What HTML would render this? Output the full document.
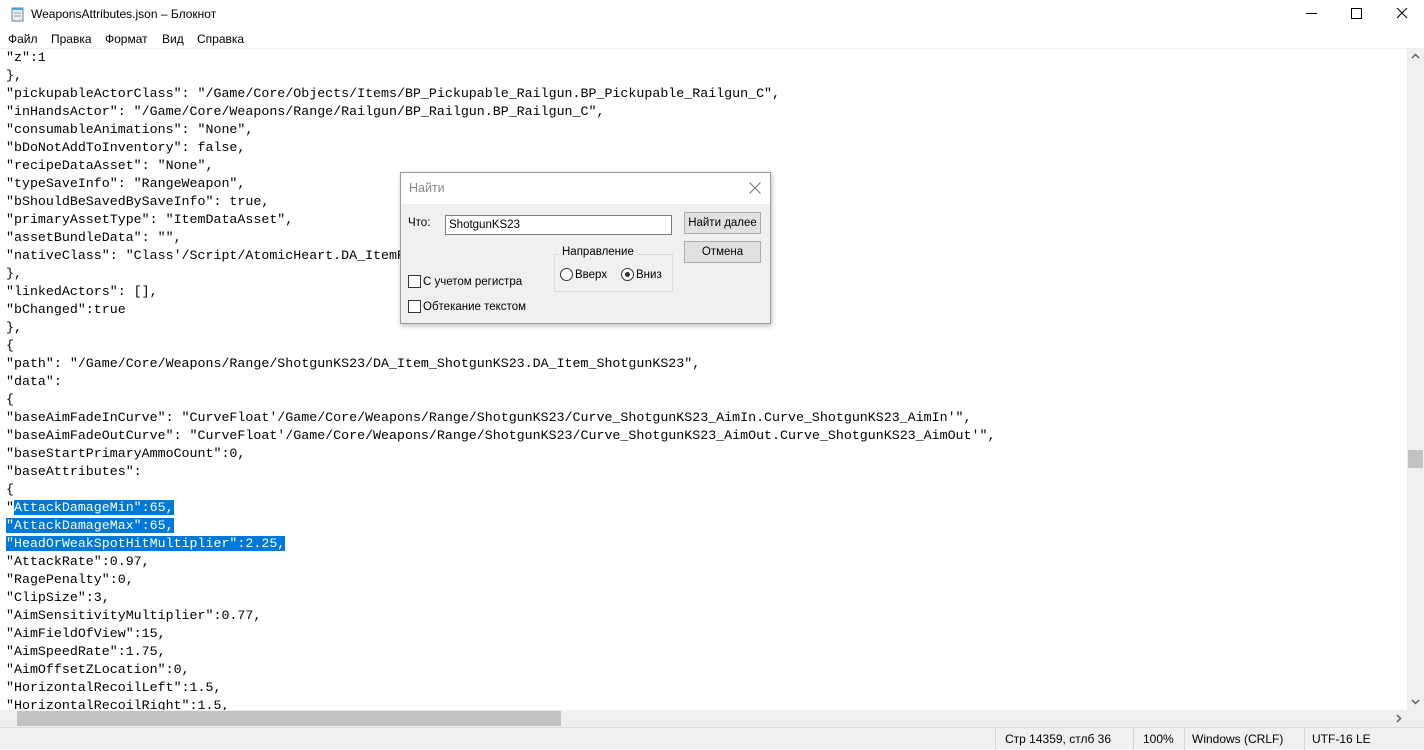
<!DOCTYPE html>
<html><head><meta charset="utf-8"><style>
*{margin:0;padding:0;box-sizing:border-box}
body{width:1424px;height:749px;overflow:hidden;background:#fff;font-family:"Liberation Sans","Noto Sans CJK SC",sans-serif;position:relative}
.title{position:absolute;top:0;left:0;width:1424px;height:30px;font-size:12px;color:#000}
.menu{position:absolute;top:30px;left:0;width:1424px;height:18px;font-size:12px}
.menu span{position:absolute;top:2px}
pre{position:absolute;left:6px;top:49px;font-family:"Liberation Mono",monospace;font-size:13.3px;line-height:18px;color:#000;white-space:pre}
.sel{background:#0078d7;color:#fff}
.ed{position:absolute;left:0;top:48px;width:1407px;height:662px;overflow:hidden;border-top:1px solid #f0f0f0}
.vs{position:absolute;left:1407px;top:48px;width:17px;height:662px;background:#f0f0f0}
.hs{position:absolute;left:0;top:710px;width:1407px;height:17px;background:#f0f0f0}
.status{position:absolute;left:0;top:727px;width:1424px;height:22px;background:#f0f0f0;border-top:1px solid #dadada;font-size:12px}
.status span{position:absolute;top:4px}
.sep{position:absolute;top:0;width:1px;height:22px;background:#d7d7d7}
.dlg{position:absolute;left:400px;top:172px;width:371px;height:152px;background:#f0f0f0;border:1px solid #9a9a9a;box-shadow:1px 2px 5px rgba(0,0,0,.25);font-size:11.5px}
.dlg .hd{height:31px;background:#fff;color:#888;font-size:12.5px;padding:8px 0 0 8px;position:relative}
.ab{position:absolute}
.btn{position:absolute;width:77px;height:22px;background:#e1e1e1;border:1px solid #adadad;text-align:center;line-height:20px}
.cb{position:absolute;width:13px;height:13px;border:1px solid #333;background:#fff}
.rb{position:absolute;width:13px;height:13px;border:1px solid #333;border-radius:50%;background:#fff}
</style></head><body>
<div class="title">
<svg class="ab" style="left:10px;top:6px" width="16" height="16"><rect x="2" y="2" width="11" height="13" fill="#e8eef5" stroke="#6b7f95"/><rect x="2" y="2" width="11" height="2" fill="#4aa0e0"/><line x1="4" y1="7" x2="11" y2="7" stroke="#99a"/><line x1="4" y1="10" x2="11" y2="10" stroke="#99a"/></svg>
<span class="ab" style="left:31px;top:7px">WeaponsAttributes.json – Блокнот</span>
<svg class="ab" style="left:1300px;top:0" width="124" height="30"><line x1="6" y1="13.5" x2="17" y2="13.5" stroke="#000"/><rect x="51.5" y="8.5" width="10" height="10" fill="none" stroke="#000"/><path d="M97 8 L107 18 M107 8 L97 18" stroke="#000"/></svg>
</div>
<div class="menu"><span style="left:8px">Файл</span><span style="left:51px">Правка</span><span style="left:105px">Формат</span><span style="left:162px">Вид</span><span style="left:197px">Справка</span></div>
<div class="ed"></div>
<pre>"z":1
},
"pickupableActorClass": "/Game/Core/Objects/Items/BP_Pickupable_Railgun.BP_Pickupable_Railgun_C",
"inHandsActor": "/Game/Core/Weapons/Range/Railgun/BP_Railgun.BP_Railgun_C",
"consumableAnimations": "None",
"bDoNotAddToInventory": false,
"recipeDataAsset": "None",
"typeSaveInfo": "RangeWeapon",
"bShouldBeSavedBySaveInfo": true,
"primaryAssetType": "ItemDataAsset",
"assetBundleData": "",
"nativeClass": "Class'/Script/AtomicHeart.DA_ItemRangeWeapon'"
},
"linkedActors": [],
"bChanged":true
},
{
"path": "/Game/Core/Weapons/Range/ShotgunKS23/DA_Item_ShotgunKS23.DA_Item_ShotgunKS23",
"data":
{
"baseAimFadeInCurve": "CurveFloat'/Game/Core/Weapons/Range/ShotgunKS23/Curve_ShotgunKS23_AimIn.Curve_ShotgunKS23_AimIn'",
"baseAimFadeOutCurve": "CurveFloat'/Game/Core/Weapons/Range/ShotgunKS23/Curve_ShotgunKS23_AimOut.Curve_ShotgunKS23_AimOut'",
"baseStartPrimaryAmmoCount":0,
"baseAttributes":
{
"<span class="sel">AttackDamageMin":65,</span>
<span class="sel">"AttackDamageMax":65,</span>
<span class="sel">"HeadOrWeakSpotHitMultiplier":2.25,</span>
"AttackRate":0.97,
"RagePenalty":0,
"ClipSize":3,
"AimSensitivityMultiplier":0.77,
"AimFieldOfView":15,
"AimSpeedRate":1.75,
"AimOffsetZLocation":0,
"HorizontalRecoilLeft":1.5,
"HorizontalRecoilRight":1.5,</pre>
<div class="vs">
<svg class="ab" style="left:0;top:0" width="17" height="17"><path d="M5 10 L8.5 6.5 L12 10" stroke="#606060" stroke-width="1.5" fill="none"/></svg>
<div class="ab" style="left:1px;top:402px;width:15px;height:18px;background:#c2c2c2"></div>
<svg class="ab" style="left:0;top:645px" width="17" height="17"><path d="M5 7 L8.5 10.5 L12 7" stroke="#606060" stroke-width="1.5" fill="none"/></svg>
</div>
<div class="hs">
<div class="ab" style="left:17px;top:1px;width:544px;height:15px;background:#c2c2c2"></div>
<svg class="ab" style="left:1390px;top:0" width="17" height="17"><path d="M7 5 L10.5 8.5 L7 12" stroke="#606060" stroke-width="1.5" fill="none"/></svg>
</div>
<div class="ab" style="left:1407px;top:710px;width:17px;height:17px;background:#f0f0f0"></div>
<div class="status">
<div class="sep" style="left:995px"></div><span style="left:1005px">Стр 14359, стлб 36</span>
<div class="sep" style="left:1133px"></div><span style="left:1143px">100%</span>
<div class="sep" style="left:1184px"></div><span style="left:1192px">Windows (CRLF)</span>
<div class="sep" style="left:1304px"></div><span style="left:1312px">UTF-16 LE</span>
</div>
<div class="dlg">
<div class="hd">Найти<svg class="ab" style="left:348px;top:9px" width="12" height="12"><path d="M0.5 0.5 L11.5 11.5 M11.5 0.5 L0.5 11.5" stroke="#777"/></svg></div>
<span class="ab" style="left:7px;top:44px">Что:</span>
<div class="ab" style="left:44px;top:42px;width:227px;height:20px;background:#fff;border:1px solid #7a7a7a;padding:3px 0 0 3px">ShotgunKS23</div>
<div class="btn" style="left:283px;top:39px">Найти далее</div>
<div class="btn" style="left:283px;top:68px">Отмена</div>
<div class="ab" style="left:153px;top:81px;width:119px;height:38px;border:1px solid #dcdcdc"></div>
<span class="ab" style="left:159px;top:73px;background:#f0f0f0;padding:0 2px">Направление</span>
<div class="rb" style="left:159px;top:95px"></div><span class="ab" style="left:174px;top:96px">Вверх</span>
<div class="rb" style="left:220px;top:95px"><div class="ab" style="left:3px;top:3px;width:5px;height:5px;border-radius:50%;background:#333"></div></div><span class="ab" style="left:235px;top:96px">Вниз</span>
<div class="cb" style="left:7px;top:102px"></div><span class="ab" style="left:22px;top:103px">С учетом регистра</span>
<div class="cb" style="left:7px;top:127px"></div><span class="ab" style="left:22px;top:128px">Обтекание текстом</span>
</div>
</body></html>
